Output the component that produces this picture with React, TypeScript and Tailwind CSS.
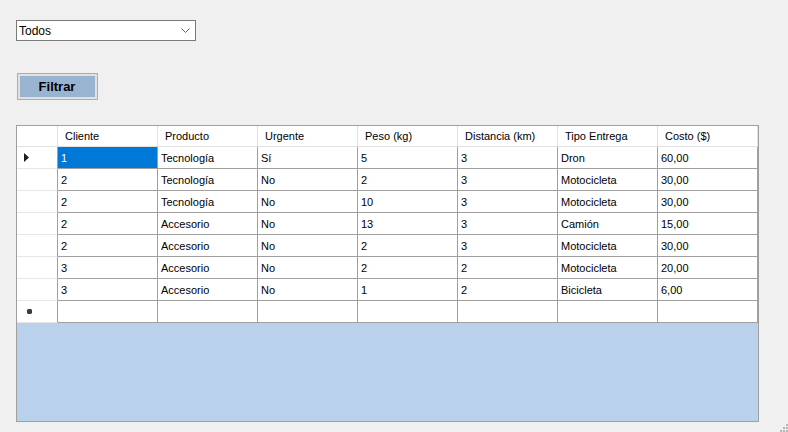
import React from "react";

const columns = ["Cliente", "Producto", "Urgente", "Peso (kg)", "Distancia (km)", "Tipo Entrega", "Costo ($)"];

const rows: string[][] = [
  ["1", "Tecnología", "Sí", "5", "3", "Dron", "60,00"],
  ["2", "Tecnología", "No", "2", "3", "Motocicleta", "30,00"],
  ["2", "Tecnología", "No", "10", "3", "Motocicleta", "30,00"],
  ["2", "Accesorio", "No", "13", "3", "Camión", "15,00"],
  ["2", "Accesorio", "No", "2", "3", "Motocicleta", "30,00"],
  ["3", "Accesorio", "No", "2", "2", "Motocicleta", "20,00"],
  ["3", "Accesorio", "No", "1", "2", "Bicicleta", "6,00"],
];

function SizeGrip() {
  return (
    <svg width="8" height="8" viewBox="0 0 8 8" className="absolute right-0 bottom-0">
      <rect x="6" y="0" width="2" height="2" fill="#b4b4b4" />
      <rect x="3" y="3" width="2" height="2" fill="#b4b4b4" />
      <rect x="6" y="3" width="2" height="2" fill="#b4b4b4" />
      <rect x="0" y="6" width="2" height="2" fill="#b4b4b4" />
      <rect x="3" y="6" width="2" height="2" fill="#b4b4b4" />
      <rect x="6" y="6" width="2" height="2" fill="#b4b4b4" />
    </svg>
  );
}

export default function App() {
  return (
    <div
      className="relative w-[788px] h-[432px] bg-[#f0f0f0] overflow-hidden flex flex-col items-start text-[11px] text-black"
      style={{ fontFamily: '"Liberation Sans", Arial, sans-serif' }}
    >
      {/* combo */}
      <div className="mt-[20px] ml-[16px] w-[180px] h-[21px] bg-white border border-[#7a7a7a] flex items-center justify-between pl-[2px] pr-[5px]">
        <span className="text-[12px]">Todos</span>
        <svg width="9" height="5" viewBox="0 0 9 5">
          <path d="M0.5 0.5 L4.5 4.5 L8.5 0.5" fill="none" stroke="#606060" strokeWidth="1" />
        </svg>
      </div>

      {/* boton */}
      <div className="mt-[32px] ml-[17px] w-[81px] h-[27px] border border-[#adadad] bg-[#e1e1e1] p-[2px]">
        <div className="w-full h-full bg-[#99b4d1] flex items-center justify-center font-bold text-[13px] pr-[1px]">
          Filtrar
        </div>
      </div>

      {/* grilla */}
      <div className="mt-[25px] ml-[16px] w-[743px] h-[297px] border border-[#a0a0a0] bg-[#b9d1ea] flex flex-col">
        <div className="flex h-[21px] bg-white">
          <div className="w-[41px] h-full border-r border-b border-[#e0e0e0]" />
          {columns.map((c) => (
            <div
              key={c}
              className="w-[100px] h-full border-r border-b border-[#e0e0e0] flex items-center pl-[7px] pt-[1px] text-[11px]"
            >
              {c}
            </div>
          ))}
        </div>
        {rows.map((r, i) => (
          <div key={i} className="flex h-[22px] bg-white">
            <div className="w-[41px] h-full border-r border-r-[#a0a0a0] border-b border-b-[#e6e6e6] flex items-center pl-[7px]">
              {i === 0 && (
                <svg width="5" height="9" viewBox="0 0 5 9">
                  <path d="M0 0 L5 4.5 L0 9 Z" fill="#1e1e1e" />
                </svg>
              )}
            </div>
            {r.map((v, j) => (
              <div
                key={j}
                className={`w-[100px] h-full border-r border-b border-[#a0a0a0] flex items-center pl-[3px] pt-[1px] ${
                  i === 0 && j === 0 ? "bg-[#0078d7] text-white" : ""
                }`}
              >
                {v}
              </div>
            ))}
          </div>
        ))}
        <div className="flex h-[22px] bg-white">
          <div className="w-[41px] h-full border-r border-r-[#a0a0a0] border-b border-b-[#e6e6e6] flex items-center pl-[10px]">
            <svg width="5" height="5" viewBox="0 0 5 5">
              <path d="M1 0 H4 L5 1 V4 L4 5 H1 L0 4 V1 Z" fill="#3c3c3c" />
            </svg>
          </div>
          {columns.map((c) => (
            <div key={c} className="w-[100px] h-full border-r border-b border-[#a0a0a0]" />
          ))}
        </div>
      </div>

      <SizeGrip />
    </div>
  );
}
